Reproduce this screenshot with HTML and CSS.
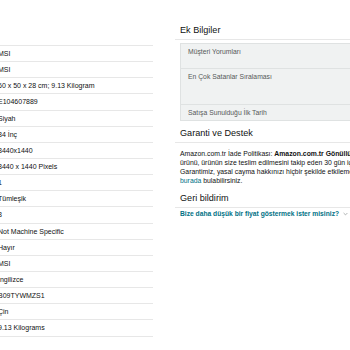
FILE: index.html
```html
<!DOCTYPE html>
<html lang="tr">
<head>
    <meta charset="UTF-8">
    <meta name="viewport" content="width=device-width, initial-scale=1.0">
    <title>Ürün Bilgileri</title>
    <link rel="stylesheet" href="styles.css">
</head>
<body>
<div class="page">
    <table class="spec-table">
        <tbody>
            <tr><td>MSI</td></tr>
            <tr><td>MSI</td></tr>
            <tr><td>60 x 50 x 28 cm; 9.13 Kilogram</td></tr>
            <tr><td>E104607889</td></tr>
            <tr><td>Siyah</td></tr>
            <tr><td>34 İnç</td></tr>
            <tr><td>3440x1440</td></tr>
            <tr><td>3440 x 1440 Pixels</td></tr>
            <tr><td>1</td></tr>
            <tr><td>Tümleşik</td></tr>
            <tr><td>3</td></tr>
            <tr><td>Not Machine Specific</td></tr>
            <tr><td>Hayır</td></tr>
            <tr><td>MSI</td></tr>
            <tr><td>İngilizce</td></tr>
            <tr><td>B09TYWMZS1</td></tr>
            <tr><td>Çin</td></tr>
            <tr><td>9.13 Kilograms</td></tr>
        </tbody>
    </table>

    <div class="side">
        <h3 class="section-title">Ek Bilgiler</h3>
        <hr class="divider">
        <table class="extra-table">
            <tbody>
                <tr class="row-reviews"><th>Müşteri Yorumları</th></tr>
                <tr class="row-rank"><th>En Çok Satanlar Sıralaması</th></tr>
                <tr class="row-date"><th>Satışa Sunulduğu İlk Tarih</th></tr>
            </tbody>
        </table>

        <h3 class="section-title spaced">Garanti ve Destek</h3>
        <hr class="divider">
        <p class="policy">
            Amazon.com.tr İade Politikası: <b>Amazon.com.tr Gönüllü İade Garantisi</b> kapsamında, satın aldığınız<br>
            ürünü, ürünün size teslim edilmesini takip eden 30 gün içinde iade edebilirsiniz. Amazon.com.tr Gönüllü İade<br>
            Garantimiz, yasal cayma hakkınızı hiçbir şekilde etkilemez. Bu konuda daha fazla bilgiyi<br>
            <a href="#">burada</a> bulabilirsiniz.
        </p>

        <h3 class="section-title spaced">Geri bildirim</h3>
        <hr class="divider">
        <a href="#" class="feedback-link">Bize daha düşük bir fiyat göstermek ister misiniz?
            <svg class="chevron" width="5" height="4" viewBox="0 0 5 4"><polyline points="0.6,1 2.5,2.9 4.4,1" fill="none" stroke="#9aa0a0" stroke-width="0.8"/></svg>
        </a>
    </div>
</div>
</body>
</html>
```

FILE: styles.css
```css
:root {
    --text-color: #0f1111;
    --muted-color: #565959;
    --link-color: #007185;
    --line-color: #e7e7e7;
    --cell-bg: #f0f2f2;
}

html, body {
    margin: 0;
    overflow: hidden;
    background-color: white;
}

body {
    font-family: 'Liberation Sans', Arial, sans-serif;
    font-size: 7px;
    color: var(--text-color);
}

.page {
    display: flex;
    align-items: flex-start;
    width: 600px;
}

/* left: product details (label column is scrolled off) */
.spec-table {
    width: 155px;
    margin-left: -2px;
    margin-top: 45px;
    border-collapse: collapse;
    border-top: 1px solid var(--line-color);
}

.spec-table td {
    padding: 3px 0;
    line-height: 9.14px;
    border-bottom: 1px solid var(--line-color);
    white-space: nowrap;
}

/* right column */
.side {
    margin-left: 22px;
    width: 420px;
    padding-top: 25px;
}

.section-title {
    margin: 0;
    padding-left: 5px;
    font-size: 9.1px;
    font-weight: normal;
    line-height: 11px;
}

.section-title.spaced {
    margin-top: 7px;
}

.divider {
    margin: 3px 0 0;
    border: 0;
    border-top: 1px solid var(--line-color);
}

.extra-table {
    margin: 3px 0 0 5px;
    width: 415px;
    border-collapse: collapse;
    border-top: 1px solid #dfe2e2;
    border-left: 1px solid #dfe2e2;
}

.extra-table th {
    background-color: var(--cell-bg);
    color: var(--muted-color);
    font-size: 6.8px;
    font-weight: normal;
    text-align: left;
    vertical-align: top;
    padding: 3px 7px 0;
    line-height: 9.3px;
    border-bottom: 1px solid #dfe2e2;
}

.row-reviews th { height: 21px; }
.row-rank th { height: 32px; }
.row-date th { height: 12px; }

.policy {
    margin: 5.5px 0 0;
    padding-left: 5px;
    font-size: 6.85px;
    line-height: 9.3px;
    white-space: nowrap;
}

.policy a {
    color: var(--link-color);
    text-decoration: none;
}

.feedback-link {
    display: block;
    margin-top: 1px;
    padding-left: 5px;
    color: var(--link-color);
    font-size: 6.7px;
    font-weight: bold;
    text-decoration: none;
    line-height: 9px;
}

.chevron {
    margin-left: 2px;
    vertical-align: middle;
}
```
